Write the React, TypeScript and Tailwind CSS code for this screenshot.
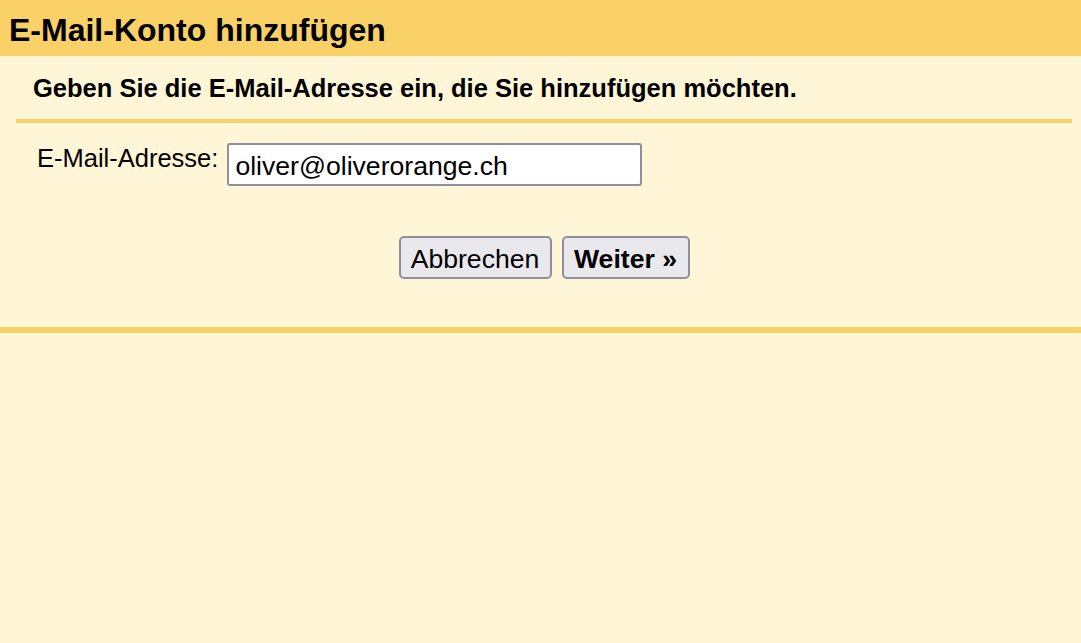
import React from "react";

export default function App() {
  const font = { fontFamily: '"Liberation Sans", Arial, Helvetica, sans-serif' };
  return (
    <div className="w-[1081px] h-[643px] bg-[#fef6d7] text-black overflow-hidden" style={font}>
      <div className="h-[56px] bg-[#f9d166] flex items-center pl-[9px] pt-[3px]">
        <h1 className="text-[32px] font-bold leading-none">E-Mail-Konto hinzufügen</h1>
      </div>
      <div className="pl-[16px] pr-[9px]">
        <div className="h-[63px] flex items-center pl-[17px] pt-[2px]">
          <p className="text-[25.5px] font-bold leading-none">Geben Sie die E-Mail-Adresse ein, die Sie hinzufügen möchten.</p>
        </div>
        <div className="h-[4px] bg-[#f9d166]" />
        <div className="flex items-start pt-[20px] pl-[21px] gap-[9px]">
          <label className="text-[25.5px] leading-none pt-[3px]">E-Mail-Adresse:</label>
          <input
            className="w-[415px] h-[43px] border-2 border-[#8f8f9d] rounded-[3px] bg-white px-[6px] pt-[3px] text-[26.6px] outline-none"
            defaultValue="oliver@oliverorange.ch"
            style={font}
          />
        </div>
        <div className="flex justify-center gap-[10px] pt-[50px] pb-[48px]">
          <button className="w-[153px] h-[43px] border-2 border-[#8f8f9d] rounded-[5px] bg-[#e9e9ed] text-[26.6px] pt-[2px]" style={font}>
            Abbrechen
          </button>
          <button className="w-[128px] h-[43px] border-2 border-[#8f8f9d] rounded-[5px] bg-[#e9e9ed] text-[26.6px] font-bold pt-[2px]" style={font}>
            Weiter »
          </button>
        </div>
      </div>
      <div className="h-[6px] bg-[#f9d166]" />
    </div>
  );
}
